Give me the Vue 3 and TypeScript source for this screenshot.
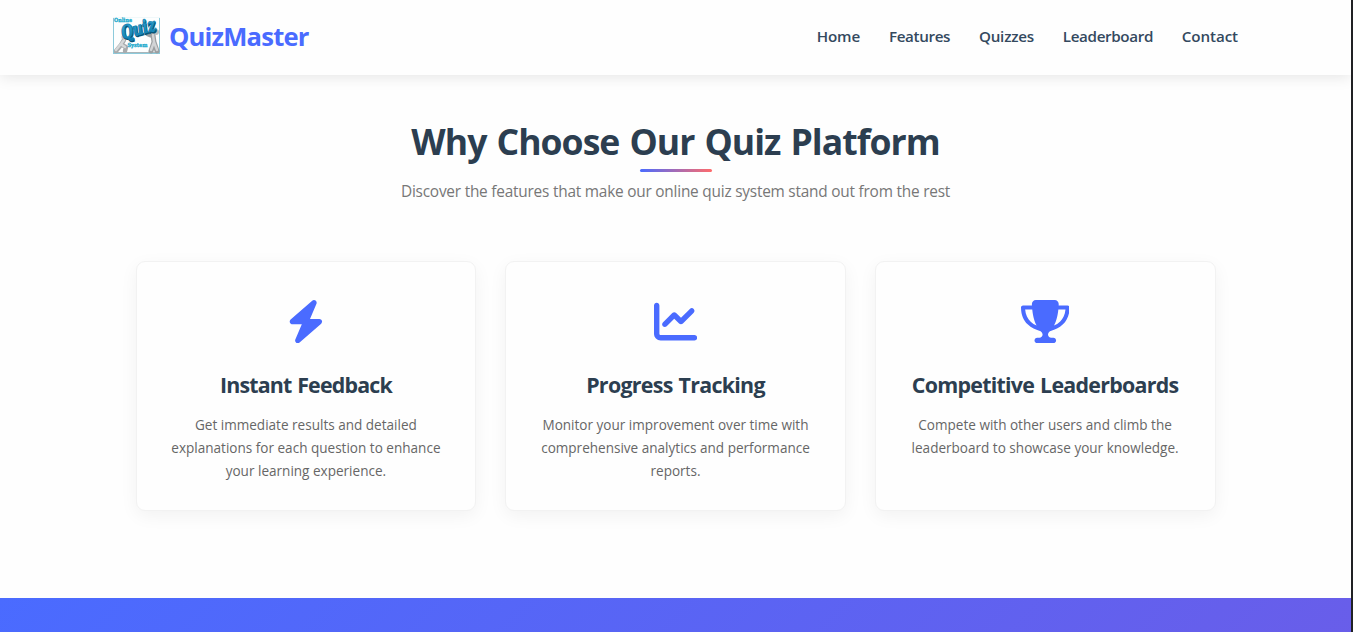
<script setup lang="ts">
interface NavItem {
  label: string
  cls: string
}
interface Feature {
  title: string
  cls: string
  lines: string[]
  viewBox: string
  width: number
  path: string
}

const navItems: NavItem[] = [
  { label: 'Home', cls: 'home' },
  { label: 'Features', cls: 'features' },
  { label: 'Quizzes', cls: 'quizzes' },
  { label: 'Leaderboard', cls: 'leaderboard' },
  { label: 'Contact', cls: 'contact' },
]

const features: Feature[] = [
  {
    title: 'Instant Feedback',
    cls: 'feedback',
    lines: [
      'Get immediate results and detailed',
      'explanations for each question to enhance',
      'your learning experience.',
    ],
    viewBox: '0 0 448 512',
    width: 37.8,
    path: 'M349.4 44.6c5.9-13.7 1.5-29.7-10.6-38.5s-28.6-8-39.9 1.8l-256 224c-10 8.8-13.6 22.9-8.9 35.3S50.7 288 64 288H175.5L98.6 467.4c-5.9 13.7-1.5 29.7 10.6 38.5s28.6 8 39.9-1.8l256-224c10-8.8 13.6-22.9 8.9-35.3s-16.6-20.7-30-20.7H272.5L349.4 44.6z',
  },
  {
    title: 'Progress Tracking',
    cls: 'progress',
    lines: [
      'Monitor your improvement over time with',
      'comprehensive analytics and performance',
      'reports.',
    ],
    viewBox: '0 0 512 512',
    width: 43.2,
    path: 'M64 64c0-17.7-14.3-32-32-32S0 46.3 0 64V400c0 44.2 35.8 80 80 80H480c17.7 0 32-14.3 32-32s-14.3-32-32-32H80c-8.8 0-16-7.2-16-16V64zm406.6 86.6c12.5-12.5 12.5-32.8 0-45.3s-32.8-12.5-45.3 0L320 210.7l-57.4-57.4c-12.5-12.5-32.8-12.5-45.3 0l-112 112c-12.5 12.5-12.5 32.8 0 45.3s32.8 12.5 45.3 0L240 221.3l57.4 57.4c12.5 12.5 32.8 12.5 45.3 0l128-128z',
  },
  {
    title: 'Competitive Leaderboards',
    cls: 'competitive',
    lines: ['Compete with other users and climb the', 'leaderboard to showcase your knowledge.'],
    viewBox: '0 0 576 512',
    width: 48.6,
    path: 'M400 0H176c-26.5 0-48.1 21.8-47.1 48.2c.2 5.3 .4 10.6 .7 15.8H24C10.7 64 0 74.7 0 88c0 92.6 33.5 157 78.5 200.7c44.3 43.1 98.3 64.8 138.1 75.8c23.4 6.5 39.4 26 39.4 45.6c0 20.9-17 37.9-37.9 37.9H192c-17.7 0-32 14.3-32 32s14.3 32 32 32H384c17.7 0 32-14.3 32-32s-14.3-32-32-32H357.9C337 448 320 431 320 410.1c0-19.6 15.9-39.2 39.4-45.6c39.9-11 93.9-32.7 138.2-75.8C542.5 245 576 180.6 576 88c0-13.3-10.7-24-24-24H446.4c.3-5.2 .5-10.4 .7-15.8C448.1 21.8 426.5 0 400 0zM48.9 112h84.4c9.1 90.1 29.2 150.3 51.9 190.6c-24.9-11-50.8-26.5-73.2-48.3c-32-31.1-58-76-63-142.3zM464.1 254.3c-22.4 21.8-48.3 37.3-73.2 48.3c22.7-40.3 42.8-100.5 51.9-190.6h84.4c-5.1 66.3-31.1 111.2-63 142.3z',
  },
]
</script>

<template>
  <div class="viewport">
    <div class="page">
      <header class="header">
        <div class="brand">
          <svg class="logo" viewBox="0 0 47 37" width="47" height="37">
            <defs>
              <linearGradient id="word" x1="0" y1="0" x2="0" y2="1">
                <stop offset="0" stop-color="#42b0da" />
                <stop offset="1" stop-color="#0878aa" />
              </linearGradient>
            </defs>
            <rect x="0.5" y="0.5" width="46" height="36" fill="#fdfefe" stroke="#8ccadb" />
            <path d="M0 0.5h47" stroke="#f0f8fa" />
            <path d="M1 35.5h45" stroke="#a9b5b9" stroke-width="1.2" />
            <g fill="none" stroke-linecap="round" stroke-linejoin="round">
              <path d="M11 23L8 28L3 34M9 28l4 2-1 4" stroke="#a8abad" stroke-width="4.4" />
              <path d="M11 23L8 27L3 33M9 28l3 2" stroke="#d6d8d9" stroke-width="2.4" />
              <path d="M40 18l1 7-3 9M41 25l3 9M40 19l-5-2" stroke="#9c9fa1" stroke-width="5" />
              <path d="M40 18l1 7-3 8M41 25l3 8" stroke="#d2d4d6" stroke-width="2.4" />
            </g>
            <circle cx="11" cy="20" r="2.6" fill="#bfc2c4" />
            <circle cx="43" cy="15" r="3" fill="#b9bcbe" />
            <text class="logo-word shade" x="10.4" y="23.2" transform="rotate(-15 10.4 23.2)" textLength="35" lengthAdjust="spacingAndGlyphs">Quiz</text>
            <text class="logo-word face" x="9.8" y="22" transform="rotate(-15 9.8 22)" textLength="35" lengthAdjust="spacingAndGlyphs">Quiz</text>
            <text class="logo-small" x="1" y="5.4" textLength="18" lengthAdjust="spacingAndGlyphs">Online</text>
            <text class="logo-small" x="14.5" y="30" textLength="20" lengthAdjust="spacingAndGlyphs">System</text>
          </svg>
          <span class="brand-name">QuizMaster</span>
        </div>
        <nav class="nav">
          <a v-for="item in navItems" :key="item.label" class="nav-link" :class="item.cls">{{ item.label }}</a>
        </nav>
      </header>

      <main class="section">
        <h2 class="title">Why Choose Our Quiz Platform</h2>
        <div class="underline"></div>
        <p class="subtitle">Discover the features that make our online quiz system stand out from the rest</p>
        <div class="grid">
          <article v-for="f in features" :key="f.title" class="card">
            <svg class="icon" :viewBox="f.viewBox" :width="f.width" height="43.2"><path :d="f.path" /></svg>
            <h3 class="card-title" :class="f.cls">{{ f.title }}</h3>
            <p class="card-text">
              <span v-for="line in f.lines" :key="line" class="line">{{ line }}</span>
            </p>
          </article>
        </div>
      </main>
      <div class="banner"></div>
    </div>
  </div>
</template>

<style>
body {
  margin: 0;
  overflow: hidden;
}
</style>

<style scoped>
.viewport {
  width: 1353px;
  height: 632px;
  box-sizing: border-box;
  border-right: 2px solid #202124;
  overflow: hidden;
  background: #fefefe;
  font-family: 'Open Sans', 'Noto Sans', sans-serif;
}
.page {
  height: 632px;
  display: flex;
  flex-direction: column;
}
.header {
  height: 75px;
  flex: none;
  box-sizing: border-box;
  padding: 0 113px;
  display: flex;
  align-items: center;
  justify-content: space-between;
  background: #fefefe;
  box-shadow: 0 2px 14px rgba(0, 0, 0, 0.1);
}
.brand {
  display: flex;
  align-items: center;
  gap: 9px;
  height: 71px;
  align-self: flex-start;
}
.logo {
  display: block;
  overflow: visible;
}
.logo-word {
  font-family: 'DejaVu Serif', serif;
  font-size: 18px;
  font-weight: 700;
  font-style: italic;
}
.face {
  fill: url(#word);
  stroke: #1887b8;
  stroke-width: 0.9px;
}
.shade {
  fill: #075478;
  stroke: #075478;
  stroke-width: 1.4px;
}
.logo-small {
  font-family: 'DejaVu Serif', serif;
  font-size: 5.6px;
  font-weight: 700;
  fill: #18a8cc;
  stroke: #18a8cc;
  stroke-width: 0.3px;
}
.brand-name {
  font-size: 25.6px;
  line-height: 36px;
  padding-top: 2px;
  font-weight: 700;
  letter-spacing: -0.8px;
  color: #4a6bff;
  white-space: nowrap;
}
.nav {
  display: flex;
  gap: 28.8px;
  align-self: flex-start;
  padding-top: 25px;
}
.nav-link {
  font-size: 15.2px;
  line-height: 23px;
  font-weight: 600;
  letter-spacing: -0.2px;
  color: #34495e;
  white-space: nowrap;
}
.nav-link.features,
.nav-link.leaderboard {
  letter-spacing: -0.36px;
}
.nav-link.contact,
.nav-link.home {
  letter-spacing: -0.1px;
}
.section {
  height: 523px;
  flex: none;
  box-sizing: border-box;
  padding-top: 43px;
  display: flex;
  flex-direction: column;
  align-items: center;
}
.title {
  margin: 0;
  font-size: 35.6px;
  line-height: 46px;
  font-weight: 700;
  letter-spacing: -0.98px;
  word-spacing: 1.8px;
  color: #2c3e50;
  white-space: nowrap;
}
.underline {
  width: 72px;
  height: 3px;
  margin: 5px 0 0 1px;
  border-radius: 2px;
  background: linear-gradient(90deg, #4a6bff, #ff6b6b);
}
.subtitle {
  margin: 8px 0 0;
  font-size: 15.4px;
  line-height: 23px;
  letter-spacing: -0.22px;
  color: #777;
  white-space: nowrap;
}
.grid {
  width: 1080px;
  margin-top: 58px;
  display: grid;
  grid-template-columns: repeat(3, minmax(0, 1fr));
  gap: 28.8px;
}
.card {
  height: 250px;
  box-sizing: border-box;
  padding-top: 38px;
  border: 1px solid #f2f2f2;
  border-radius: 9px;
  background: #fefefe;
  box-shadow: 0 5px 18px rgba(0, 0, 0, 0.05);
  display: flex;
  flex-direction: column;
  align-items: center;
}
.icon {
  display: block;
  flex: none;
  fill: #4a6bff;
}
.card-title {
  margin: 27px 0 0;
  font-size: 21.4px;
  line-height: 30px;
  font-weight: 700;
  word-spacing: 1px;
  color: #2c3e50;
  white-space: nowrap;
}
.card-title.feedback {
  letter-spacing: -0.83px;
}
.card-title.progress {
  letter-spacing: -0.7px;
}
.card-title.competitive {
  letter-spacing: -0.73px;
}
.card-text {
  margin: 14px 0 0;
  font-size: 13.55px;
  line-height: 23px;
  color: #666;
  text-align: center;
}
.line {
  display: block;
  white-space: nowrap;
}
.banner {
  height: 200px;
  flex: none;
  background: linear-gradient(135deg, #4a6bff 0%, #6c5ce7 100%);
}
</style>
